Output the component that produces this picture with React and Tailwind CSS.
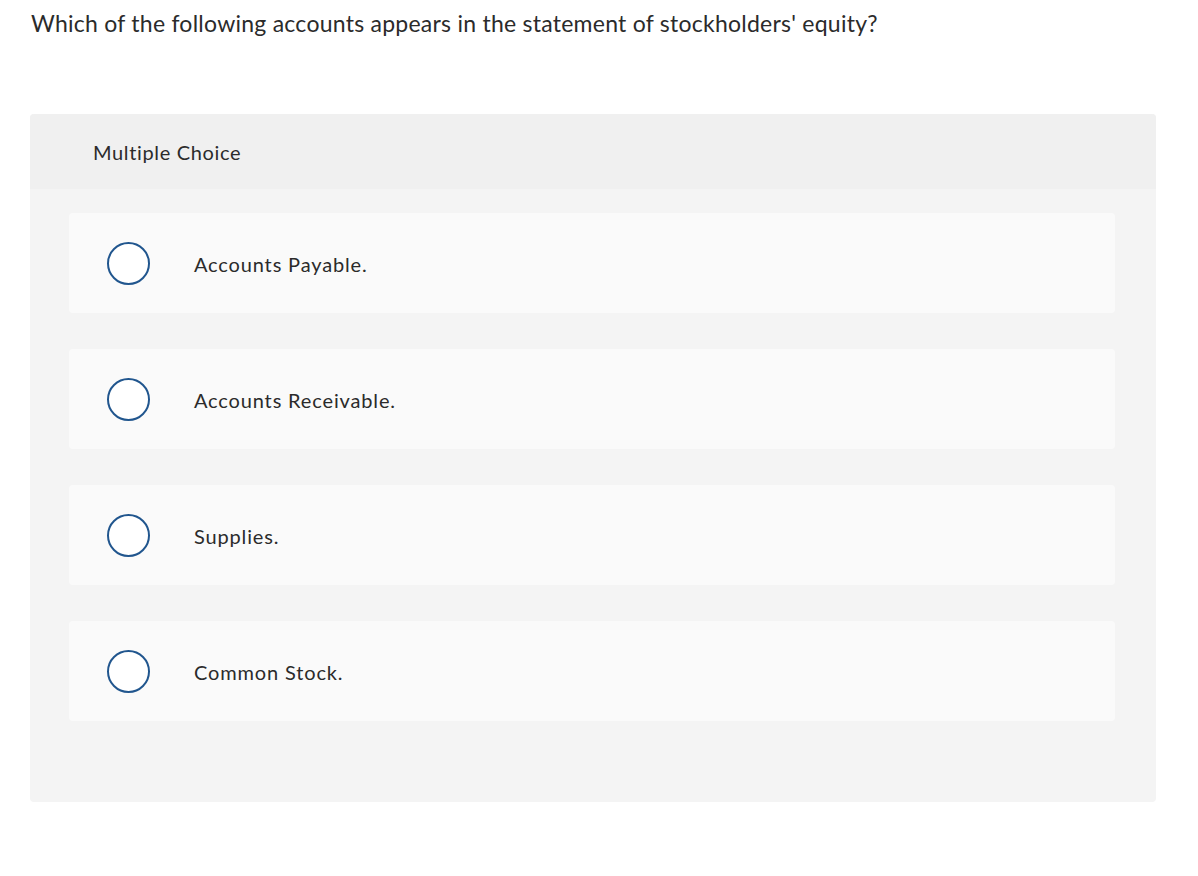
import React from "react";

const options = ["Accounts Payable.", "Accounts Receivable.", "Supplies.", "Common Stock."];

export default function App() {
  return (
    <div className="min-h-[876px] w-[1198px] bg-white text-[#2b2b2b]" style={{ fontFamily: "Lato, 'Open Sans', sans-serif" }}>
      <div className="pl-[31px] pt-[9px]">
        <p className="text-[23px] leading-[28px] tracking-[0.25px]">
          Which of the following accounts appears in the statement of stockholders' equity?
        </p>
      </div>
      <div className="mx-[30px] mt-[77px] w-[1126px] overflow-hidden rounded-[4px] bg-[#f4f4f4]">
        <div className="flex h-[75px] items-center bg-[#f0f0f0] pl-[63px]">
          <span className="text-[20px] leading-[24px] tracking-[0.65px]">Multiple Choice</span>
        </div>
        <div className="flex flex-col gap-[36px] pl-[39px] pr-[41px] pt-[24px] pb-[81px]">
          {options.map((o) => (
            <div key={o} className="flex h-[100px] items-center rounded-[4px] bg-[#fafafa]">
              <div className="ml-[38px] h-[43px] w-[43px] shrink-0 rounded-full border-2 border-[#21568e] bg-white" />
              <span className="ml-[44px] mt-[1px] text-[20px] leading-[24px] tracking-[0.85px]">{o}</span>
            </div>
          ))}
        </div>
      </div>
    </div>
  );
}
